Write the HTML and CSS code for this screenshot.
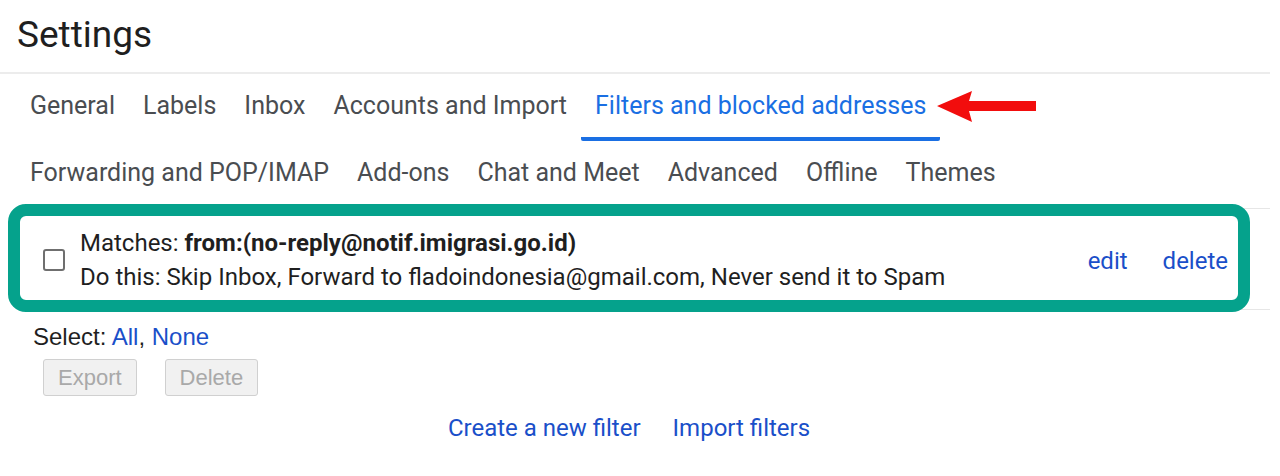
FILE: index.html
```html
<!DOCTYPE html>
<html lang="en">
<head>
    <meta charset="UTF-8">
    <meta name="viewport" content="width=device-width, initial-scale=1.0">
    <title>Settings - Filters and blocked addresses</title>
    <link rel="stylesheet" href="styles.css">
</head>
<body>
    <div class="settings">
        <header class="settings-header">
            <h1>Settings</h1>
        </header>

        <nav class="tabs">
            <div class="tab-row">
                <a class="tab">General</a>
                <a class="tab">Labels</a>
                <a class="tab">Inbox</a>
                <a class="tab">Accounts and Import</a>
                <a class="tab active">Filters and blocked addresses
                    <svg class="arrow" width="100" height="32" viewBox="0 0 100 32">
                        <polygon points="0,15 35,0 32,10 99,10 99,20 32,20 35,31" fill="#f20d0d"/>
                    </svg>
                </a>
            </div>
            <div class="tab-row">
                <a class="tab">Forwarding and POP/IMAP</a>
                <a class="tab">Add-ons</a>
                <a class="tab">Chat and Meet</a>
                <a class="tab">Advanced</a>
                <a class="tab">Offline</a>
                <a class="tab">Themes</a>
            </div>
        </nav>

        <section class="filter-list">
            <div class="filter-row">
                <span class="checkbox"></span>
                <div class="filter-text">
                    <div>Matches: <b>from:(no-reply@notif.imigrasi.go.id)</b></div>
                    <div>Do this: Skip Inbox, Forward to fladoindonesia@gmail.com, Never send it to Spam</div>
                </div>
                <div class="filter-actions">
                    <a class="link">edit</a>
                    <a class="link">delete</a>
                </div>
            </div>
        </section>

        <div class="select-line">Select: <a class="link">All</a>, <a class="link">None</a></div>
        <div class="bulk-buttons">
            <button disabled>Export</button>
            <button disabled>Delete</button>
        </div>

        <div class="bottom-links">
            <a class="link">Create a new filter</a>
            <a class="link">Import filters</a>
        </div>
    </div>
</body>
</html>
```

FILE: styles.css
```css
/* page */
body {
    margin: 0;
    background-color: #ffffff;
    font-family: Roboto, "Noto Sans", sans-serif;
    color: #1f1f1f;
}

.settings {
    width: 1270px;
}

.settings-header {
    height: 72px;
    border-bottom: 2px solid #ececec;
}

.settings-header h1 {
    margin: 0;
    padding: 13px 0 0 17px;
    font-size: 37px;
    font-weight: 400;
    line-height: 44px;
    color: #1f1f1f;
}

/* tabs */
.tabs {
    padding-left: 16px;
}

.tab-row {
    display: flex;
}

.tab {
    position: relative;
    display: flex;
    align-items: center;
    height: 63px;
    padding: 0 14px;
    border-bottom: 4px solid transparent;
    font-size: 25px;
    color: #4a4d51;
    white-space: nowrap;
}

.tab.active {
    color: #1a6fe3;
    border-bottom-color: #1a6fe3;
    border-radius: 2px;
}

.arrow {
    position: absolute;
    left: 100%;
    top: 17px;
    margin-left: -3px;
}

/* filter list */
.filter-list {
    border-top: 1px solid #e6e6e6;
    border-bottom: 1px solid #e6e6e6;
    margin-left: 30px;
    padding: 0;
}

.filter-row {
    display: flex;
    align-items: center;
    margin: -5px 20px -3px -22px;
    height: 80px;
    padding-top: 4px;
    border: 12px solid #05a28c;
    border-radius: 18px;
    background-color: #ffffff;
}

.checkbox {
    width: 18px;
    height: 18px;
    margin: 0 15px 0 23px;
    border: 2px solid #6f6f6f;
    border-radius: 3px;
}

.filter-text {
    flex: 1;
    font-size: 24px;
    line-height: 34px;
    color: #1f1f1f;
    white-space: nowrap;
}

.filter-text b {
    font-weight: 700;
}

.filter-actions {
    display: flex;
    gap: 35px;
    padding: 2px 10px 0 0;
    font-size: 24px;
}

.link {
    color: #1a4fc9;
    text-decoration: none;
}

/* bottom controls */
.select-line {
    margin: 13px 0 0 33px;
    font-family: "Liberation Sans", Arial, sans-serif;
    font-size: 24px;
    color: #1f1f1f;
}

.bulk-buttons {
    display: flex;
    gap: 28px;
    margin: 8px 0 0 43px;
}

.bulk-buttons button {
    height: 37px;
    padding: 0 14px;
    font-family: "Liberation Sans", Arial, sans-serif;
    font-size: 22px;
    color: #a9a9a9;
    background-color: #f1f1f1;
    border: 1px solid #d0d0d0;
    border-radius: 3px;
}

.bottom-links {
    display: flex;
    justify-content: center;
    gap: 32px;
    margin: 18px 12px 0 0;
    font-size: 24px;
}
```
